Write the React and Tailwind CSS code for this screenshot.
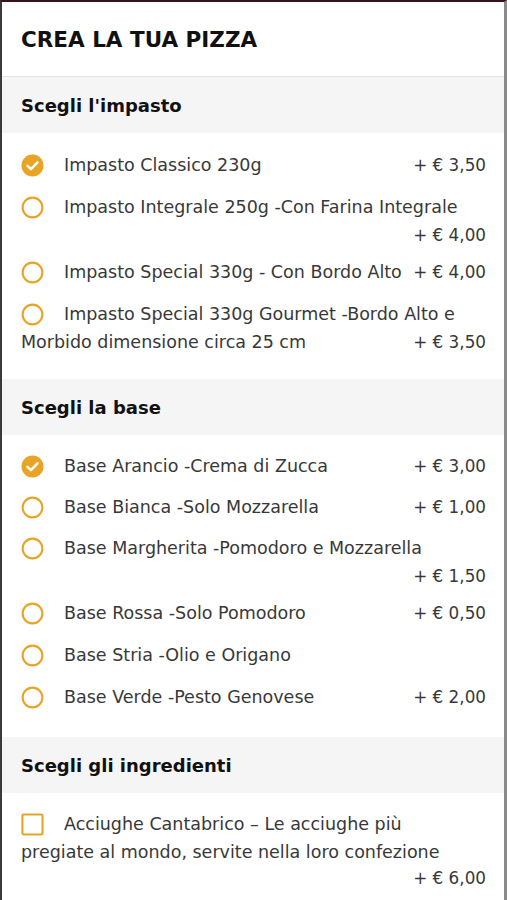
import React from "react";

const ORANGE = "#e9a425";

function Radio({ checked }) {
  return (
    <svg width="23" height="23" viewBox="0 0 24 24" className="inline-block align-middle shrink-0">
      {checked ? (
        <>
          <circle cx="12" cy="12" r="11.5" fill={ORANGE} />
          <path d="M6.8 12.3 L10.4 15.8 L17.2 8.8" fill="none" stroke="#fff" strokeWidth="2.6" strokeLinecap="round" strokeLinejoin="round" />
        </>
      ) : (
        <circle cx="12" cy="12" r="10.3" fill="#fff" stroke={ORANGE} strokeWidth="2.2" />
      )}
    </svg>
  );
}

function Checkbox() {
  return (
    <svg width="23" height="23" viewBox="0 0 24 24" className="inline-block align-middle shrink-0">
      <rect x="1.5" y="1.5" width="21" height="21" rx="1.5" fill="#fff" stroke={ORANGE} strokeWidth="2.2" />
    </svg>
  );
}

function SectionHeader({ children }) {
  return (
    <div className="h-[56px] bg-[#f5f5f5] flex items-center pl-[19px] text-[18px] font-bold text-[#111]">
      {children}
    </div>
  );
}

function Price({ children }) {
  return <span className="whitespace-nowrap text-[16.8px]">{children}</span>;
}

function Row({ checked, label, price, priceBelow, gap = "mb-[14px]" }) {
  return (
    <div className={gap + " last:mb-0"}>
      <div className="flex items-center h-[28px] leading-[28px]">
        <Radio checked={checked} />
        <span className="ml-[20px] flex-1 whitespace-nowrap">{label}</span>
        {!priceBelow && <Price>{price}</Price>}
      </div>
      {priceBelow && (
        <div className="text-right leading-[28px] h-[23px]">
          <Price>{price}</Price>
        </div>
      )}
    </div>
  );
}

export default function App() {
  return (
    <div
      className="w-[507px] min-h-[900px] bg-white border-t-2 border-l-2 border-r-[3px] border-t-[#3a1219] border-l-[#3a3a3a] border-r-[#8a8a8a] text-[#383838] text-[17.5px]"
      style={{ fontFamily: '"DejaVu Sans", "Noto Sans", sans-serif' }}
    >
      <div className="h-[75px] flex items-center pl-[19px] pt-[2px] border-b border-[#e2e2e2]">
        <h1 className="text-[21.5px] font-bold text-[#111]">CREA LA TUA PIZZA</h1>
      </div>

      <SectionHeader>Scegli l'impasto</SectionHeader>
      <div className="pl-[19px] pr-[18px] pt-[18px] pb-[23px]">
        <Row checked label="Impasto Classico 230g" price="+ € 3,50" />
        <Row label="Impasto Integrale 250g -Con Farina Integrale" price="+ € 4,00" priceBelow />
        <Row label="Impasto Special 330g - Con Bordo Alto" price="+ € 4,00" />
        <div>
          <div className="flex items-center h-[28px] leading-[28px]">
            <Radio />
            <span className="ml-[20px] whitespace-nowrap">Impasto Special 330g Gourmet -Bordo Alto e</span>
          </div>
          <div className="flex justify-between h-[28px] leading-[28px]">
            <span className="whitespace-nowrap">Morbido dimensione circa 25 cm</span>
            <Price>+ € 3,50</Price>
          </div>
        </div>
      </div>

      <SectionHeader>Scegli la base</SectionHeader>
      <div className="pl-[19px] pr-[18px] pt-[17px] pb-[26px]">
        <Row gap="mb-[13px]" checked label="Base Arancio -Crema di Zucca" price="+ € 3,00" />
        <Row gap="mb-[13px]" label="Base Bianca -Solo Mozzarella" price="+ € 1,00" />
        <Row label="Base Margherita -Pomodoro e Mozzarella" price="+ € 1,50" priceBelow />
        <Row label="Base Rossa -Solo Pomodoro" price="+ € 0,50" />
        <Row label="Base Stria -Olio e Origano" price="" />
        <Row label="Base Verde -Pesto Genovese" price="+ € 2,00" />
      </div>

      <SectionHeader>Scegli gli ingredienti</SectionHeader>
      <div className="pl-[19px] pr-[18px] pt-[17px] pb-[20px]">
        <div>
          <div className="flex items-center h-[28px] leading-[28px]">
            <Checkbox />
            <span className="ml-[20px] whitespace-nowrap">Acciughe Cantabrico – Le acciughe più</span>
          </div>
          <div className="h-[28px] leading-[28px] whitespace-nowrap">pregiate al mondo, servite nella loro confezione</div>
          <div className="text-right h-[24px] leading-[24px]">
            <Price>+ € 6,00</Price>
          </div>
        </div>
      </div>
    </div>
  );
}
